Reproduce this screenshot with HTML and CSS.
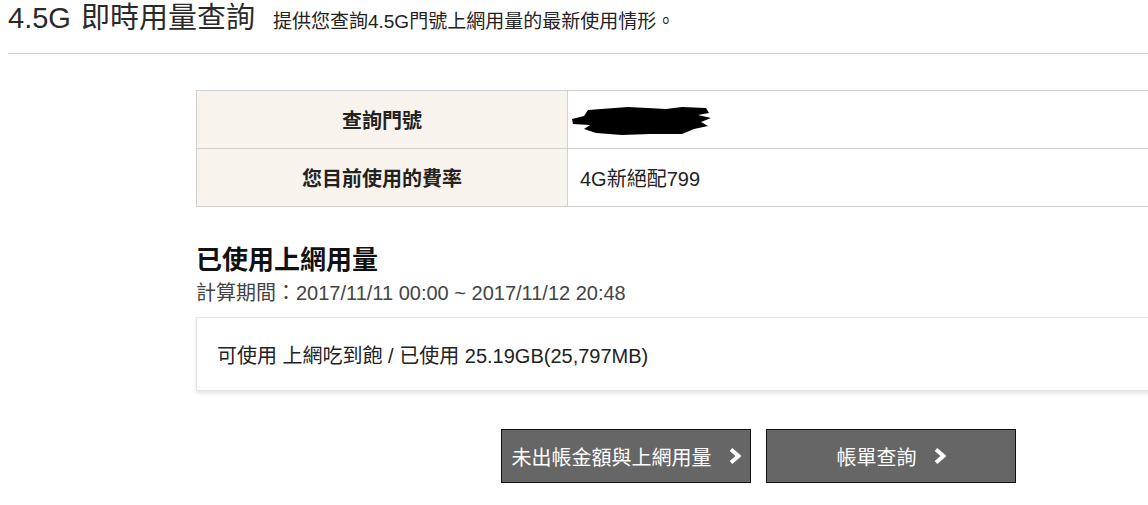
FILE: index.html
```html
<!DOCTYPE html>
<html lang="zh-Hant">
<head>
    <meta charset="UTF-8">
    <meta name="viewport" content="width=device-width, initial-scale=1.0">
    <title>4.5G 即時用量查詢</title>
    <link rel="stylesheet" href="styles.css">
</head>
<body>
    <header class="page-head">
        <h1>4.5G 即時用量查詢</h1>
        <span class="lead">提供您查詢4.5G門號上網用量的最新使用情形。</span>
    </header>
    <hr class="divider">

    <main class="content">
        <table class="info">
            <tr>
                <th>查詢門號</th>
                <td>
                    <svg class="redact" width="142" height="32" viewBox="0 0 142 32">
                        <path d="M2 15 L14 12 L18 6 L58 3 L96 5 L112 3 L136 4 L139 9 L128 11 L141 14 L131 18 L138 22 L124 25 L112 30 L80 30 L52 31 L26 29 L14 25 L20 21 L3 20 Z" fill="#000"/>
                    </svg>
                </td>
            </tr>
            <tr>
                <th>您目前使用的費率</th>
                <td>4G新絕配799</td>
            </tr>
        </table>

        <section class="usage">
            <h2>已使用上網用量</h2>
            <p class="period">計算期間：2017/11/11 00:00 ~ 2017/11/12 20:48</p>
            <div class="usage-box">可使用 上網吃到飽 / 已使用 25.19GB(25,797MB)</div>
        </section>

        <div class="actions">
            <a class="btn" href="#">未出帳金額與上網用量
                <svg class="chev" width="12" height="18" viewBox="0 0 12 18"><polyline points="2,2.5 9.5,9 2,15.5" fill="none" stroke="#fff" stroke-width="4"/></svg>
            </a>
            <a class="btn" href="#">帳單查詢
                <svg class="chev" width="12" height="18" viewBox="0 0 12 18"><polyline points="2,2.5 9.5,9 2,15.5" fill="none" stroke="#fff" stroke-width="4"/></svg>
            </a>
        </div>
    </main>
</body>
</html>
```

FILE: styles.css
```css
html, body {
    overflow: hidden;
}

body {
    margin: 0;
    font-family: "Liberation Sans", "Noto Sans CJK TC", sans-serif;
    color: #222;
    background: #fff;
}

.page-head {
    display: flex;
    align-items: baseline;
    padding: 0 8px;
    height: 36px;
}

.page-head h1 {
    margin: 0;
    font-size: 29px;
    font-weight: normal;
    line-height: 36px;
    color: #2a2a2a;
    word-spacing: 2px;
}

.lead {
    margin-left: 18px;
    font-size: 19px;
    color: #222;
}

.divider {
    margin: 17px 0 0 8px;
    border: none;
    border-top: 1px solid #d0d0d0;
}

.content {
    width: 1125px;
    margin-left: 196px;
}

.info {
    width: 100%;
    margin-top: 36px;
    border-collapse: collapse;
    font-size: 20px;
}

.info th, .info td {
    height: 57px;
    border: 1px solid #d0d0d0;
    padding: 0 12px;
}

.info th {
    width: 346px;
    background: #f8f3ec;
    font-weight: bold;
    text-align: center;
}

.info td {
    text-align: left;
}

.redact {
    display: block;
    margin-left: -10px;
}

.usage h2 {
    margin: 38px 0 0;
    font-size: 26px;
    line-height: 30px;
    color: #111;
}

.period {
    margin: 5px 0 0;
    font-size: 20px;
    line-height: 26px;
    color: #444;
}

.usage-box {
    margin-top: 11px;
    height: 72px;
    padding: 0 20px;
    display: flex;
    align-items: center;
    font-size: 20px;
    border: 1px solid #e4e4e8;
    box-shadow: 0 2px 4px rgba(0, 0, 0, 0.12);
}

.actions {
    display: flex;
    justify-content: center;
    gap: 15px;
    margin-top: 38px;
}

.btn {
    width: 248px;
    height: 52px;
    display: flex;
    align-items: center;
    justify-content: center;
    gap: 17px;
    background: #666;
    border: 1px solid #111;
    color: #fff;
    font-size: 20px;
    text-decoration: none;
}

.chev {
    display: block;
}
```
